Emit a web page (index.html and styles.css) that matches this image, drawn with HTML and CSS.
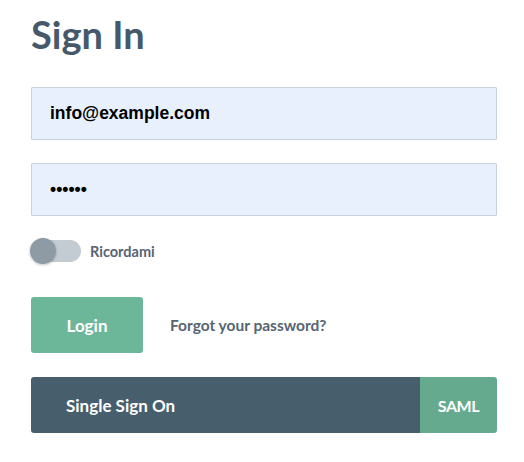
FILE: index.html
```html
<!DOCTYPE html>
<html>
<head>
<meta charset="utf-8">
<link rel="stylesheet" href="styles.css">
</head>
<body>
<div class="page">
  <h1 class="title">Sign In</h1>
  <form class="form">
    <input class="field" type="email" value="info@example.com">
    <input class="field" type="password" value="123456">
    <label class="remember">
      <span class="toggle"><span class="knob"></span></span>
      <span class="remember-text">Ricordami</span>
    </label>
    <div class="actions">
      <button type="button" class="btn-login">Login</button>
      <a class="forgot">Forgot your password?</a>
    </div>
    <div class="sso">
      <span class="sso-label">Single Sign On</span>
      <span class="sso-tag">SAML</span>
    </div>
  </form>
</div>
</body>
</html>
```
FILE: styles.css
```css
html, body {
  margin: 0;
  padding: 0;
  background: #ffffff;
}
body {
  font-family: Lato, "Open Sans", sans-serif;
}
.page {
  width: 466px;
  padding: 11px 0 0 31px;
}
.title {
  margin: 0;
  font-size: 38px;
  line-height: 46px;
  font-weight: 700;
  color: #46596a;
}
.form {
  display: flex;
  flex-direction: column;
  margin-top: 30px;
}
.field {
  box-sizing: border-box;
  width: 466px;
  height: 53px;
  margin: 0 0 23px 0;
  padding: 0 18px;
  border: 1px solid #c9d1da;
  border-radius: 1px;
  background: #e8f0fe;
  font-family: "Liberation Sans", Arial, sans-serif;
  font-size: 17.5px;
  font-weight: 700;
  color: #000;
  outline: none;
}
.remember {
  display: flex;
  align-items: center;
  gap: 9px;
  height: 26px;
  margin-top: -1px;
}
.toggle {
  position: relative;
  display: block;
  width: 50px;
  height: 22px;
  border-radius: 11px;
  background: #c3cbd3;
}
.knob {
  position: absolute;
  left: -1px;
  top: -2px;
  width: 26px;
  height: 26px;
  border-radius: 50%;
  background: #8e9aa4;
  box-shadow: 0 1px 3px rgba(0,0,0,0.25);
}
.remember-text {
  font-size: 14.5px;
  font-weight: 700;
  color: #566573;
}
.actions {
  display: flex;
  align-items: center;
  gap: 27px;
  margin-top: 33px;
}
.btn-login {
  width: 112px;
  height: 56px;
  border: none;
  border-radius: 3px;
  background: #6cb69a;
  color: #ffffff;
  font-family: Lato, "Open Sans", sans-serif;
  font-size: 17px;
  font-weight: 700;
}
.forgot {
  font-size: 15.5px;
  font-weight: 700;
  color: #566573;
}
.sso {
  display: flex;
  height: 56px;
  margin-top: 24px;
  border-radius: 3px;
  overflow: hidden;
  color: #ffffff;
  font-size: 17px;
  font-weight: 700;
}
.sso-label {
  flex: 1;
  display: flex;
  align-items: center;
  padding-left: 35px;
  background: #475e6c;
}
.sso-tag {
  width: 77px;
  display: flex;
  align-items: center;
  justify-content: center;
  background: #65aa8e;
  font-size: 16px;
  letter-spacing: -0.4px;
}
```
